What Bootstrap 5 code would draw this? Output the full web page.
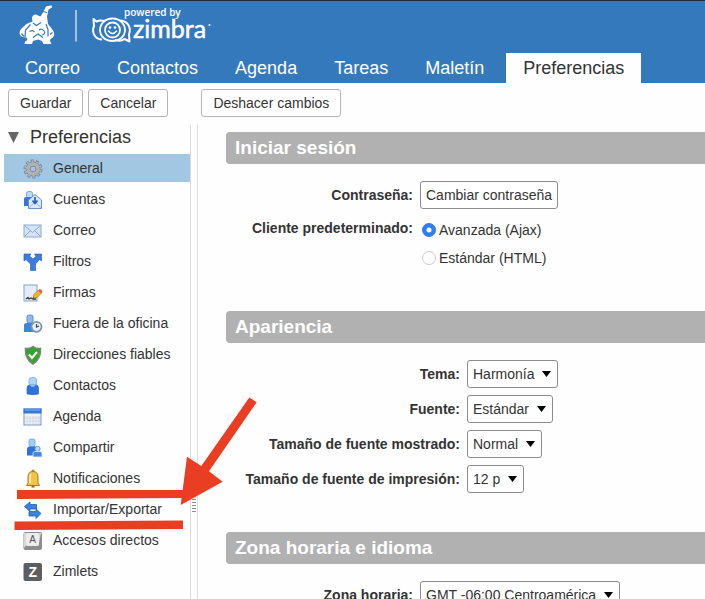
<!DOCTYPE html>
<html lang="es">
<head>
<meta charset="utf-8">
<meta name="viewport" content="width=device-width, initial-scale=1">
<title>Zimbra: Preferencias</title>
<link rel="stylesheet" href="https://cdn.jsdelivr.net/npm/bootstrap@5.3.0/dist/css/bootstrap.min.css">
<style>
  body { font: 14px/20px "Liberation Sans", Arial, sans-serif; color: #333; background: #fefefe; }
  .app-header { background: #3579bd; border-top: 1px solid #1b2c40; }
  .brand-art { display: block; margin-left: 12px; }
  .app-tabs { gap: 3px; padding-left: 8px; }
  .app-tabs .nav-link { padding: 0 17px; font-size: 18px; line-height: 30px; color: #fff; border-radius: 0; white-space: nowrap; }
  .app-tabs .nav-link.active { background: #fefefe; color: #333; margin-left: 2px; }
  .app-toolbar { padding: 6px 8px 8px; gap: 5px; }
  .zbtn { --bs-btn-font-size: 14px; --bs-btn-line-height: 20px; --bs-btn-padding-y: 3px; --bs-btn-padding-x: 11px; --bs-btn-border-color: #b5b5b5; --bs-btn-color: #333; --bs-btn-bg: #fff; --bs-btn-border-radius: 3px; --bs-btn-hover-bg: #eee; --bs-btn-hover-color: #333; }
  .zbtn-field { --bs-btn-padding-x: 5px; --bs-btn-border-color: #8c8c8c; }
  .gap-before { margin-left: 28px; }
  .tree-pane { width: 190px; padding-left: 4px; }
  .tree-title { font-size: 18px; line-height: 24px; gap: 11px; margin: 0 0 5px; padding-left: 4px; font-weight: 400; }
  .tree-items { gap: 3px; }
  .tree-items .nav-link { display: flex; align-items: center; gap: 10px; height: 28px; padding: 0 0 0 19px; color: #333; white-space: nowrap; }
  .tree-items .nav-link.active { background: #a2c7e3; }
  .tree-items svg { width: 20px; height: 20px; margin-top: 2px; flex: none; }
  .splitter { width: 8px; border: solid #dcdcdc; border-width: 0 1px; }
  .grip { width: 4px; height: 26px; margin-top: 276px; background: repeating-linear-gradient(#8b8b8b 0 1px, transparent 1px 3px); }
  .detail-pane { padding: 7px 0 0 28px; }
  .pref-block { margin-bottom: 39px; }
  .pref-title { font-size: 19px; line-height: 32px; font-weight: 700; color: #fff; background: #b1b1b1; border-radius: 4px 0 0 4px; padding-left: 9px; margin: 0 0 17px; }
  .pref-rows { display: grid; grid-template-columns: 187px 1fr; gap: 7px; }
  .pref-rows.wide { grid-template-columns: 234px 1fr; }
  .pref-name { font-weight: 700; text-align: right; line-height: 28px; white-space: nowrap; }
  .pref-name.upper { line-height: 24px; }
  .zselect { width: auto; justify-self: start; padding: 3px 22px 3px 5px; font-size: 14px; line-height: 20px; color: #333; border: 1px solid #8c8c8c; border-radius: 3px; background-color: #fff; background-position: right 6px center; background-size: 9px 6px;
    background-image: url("data:image/svg+xml,%3Csvg xmlns='http://www.w3.org/2000/svg' viewBox='0 0 9 6'%3E%3Cpath d='M0 0h9L4.5 6z'/%3E%3C/svg%3E"); }
  .choice { height: 28px; gap: 3px; padding-left: 2px; }
  .choice .form-check-input { width: 14px; height: 14px; margin: 0; border-color: #ccc; flex: none; }
  .choice .form-check-input:checked { background-color: #2f7cf6; border-color: #2f7cf6; background-size: 10px; }
  .markup { left: 0; top: 390px; pointer-events: none; }
</style>
<script src="https://cdn.jsdelivr.net/npm/bootstrap@5.3.0/dist/js/bootstrap.bundle.min.js"></script>
</head>
<body class="vh-100 overflow-hidden d-flex flex-column position-relative">

<header class="app-header">
  <svg class="brand-art" width="215" height="52" viewBox="12 1 215 52" role="img" aria-label="powered by zimbra">
    <g fill="#fff">
      <path d="M46 6.500l5.500-1.200.500 2.200-3.500 2-1.500 7 1 7.500 4 5c2.500 3 3 6 1 8.500l-2.500 1.500-.5 2 1.500 3h-8l-1.500-3-4-1.500-5 1.500-1 3H24.500l.500-2.500 2.500-1.500-1-2.500-4-.5C19 35.500 18.500 32 21.500 28.500l5-4.500 6-2.500-.500-3.500c.5-3.500 3.500-4.500 6-2.500l2.500 1 2.500-4z"/>
      <g fill="none" stroke="#3579bd" stroke-width="1.200"><path d="M30.500 24.500l-5 5.500-.500 7M33 23l3.500 2.500 4.500-3M46 24l2 5.500v7M29.500 31.500q3.500-2 5 .500M39 30q3-2 5 1t-2 4M33 37.500l5-3.500 5 3.500M21.500 33.500l2.500 3M50 34.500l2.500-2M43 11.500l4 1"/></g>
    </g>
    <path d="M76 10v31.500" stroke="#fff" stroke-opacity=".85" stroke-width="1.300"/>
    <g fill="none" stroke="#fff" stroke-linecap="round" stroke-linejoin="round">
      <circle cx="112.500" cy="30" r="7.500" stroke-width="1.800"/>
      <path d="M104.500 21c-3-1-6-.5-8 .5l-3-2.500.5 7c-2.500 6 .5 12.500 7 13.500M121 20.500c7 1 10.500 7 8 14l.5 7-5-2.500c-2 1.500-6 2-9 1" stroke-width="2"/>
      <path d="M100 30c0-6 5-11.500 12.500-11.500S125 24 125 30s-5 11-12.500 11S100 36 100 30z" stroke-width="1.800"/>
      <path d="M108.500 31q4 5 8 0" stroke-width="1.500"/>
    </g>
    <circle cx="110" cy="27.500" r="1.300" fill="#fff"/><circle cx="115" cy="27.500" r="1.300" fill="#fff"/>
    <text x="124" y="16" font-family="Open Sans, sans-serif" font-size="10" font-weight="600" fill="#fff">powered by</text>
    <text x="133" y="38" font-family="Lato, sans-serif" font-size="25" fill="#fff" stroke="#fff" stroke-width=".5">zimbra</text>
    <circle cx="209.500" cy="25" r="1" fill="#fff"/>
  </svg>
  <nav class="nav app-tabs flex-nowrap" aria-label="Aplicaciones">
    <a class="nav-link" href="#correo">Correo</a>
    <a class="nav-link" href="#contactos">Contactos</a>
    <a class="nav-link" href="#agenda">Agenda</a>
    <a class="nav-link" href="#tareas">Tareas</a>
    <a class="nav-link" href="#maletin">Maletín</a>
    <a class="nav-link active" aria-current="page" href="#preferencias">Preferencias</a>
  </nav>
</header>

<div class="app-toolbar d-flex">
  <button type="button" class="btn zbtn">Guardar</button>
  <button type="button" class="btn zbtn">Cancelar</button>
  <button type="button" class="btn zbtn gap-before">Deshacer cambios</button>
</div>

<div class="d-flex flex-grow-1 overflow-hidden">
  <aside class="tree-pane flex-shrink-0">
    <h1 class="tree-title d-flex align-items-center">
      <svg width="11" height="11" viewBox="0 0 11 11" aria-hidden="true"><path d="M0 0h11L5.500 11z" fill="#666"/></svg>Preferencias
    </h1>
    <nav class="nav flex-column tree-items" aria-label="Preferencias">
      <a class="nav-link active" href="#general"><svg viewBox="0 0 20 20"><g fill="none"><circle cx="10" cy="10" r="8" stroke="#7b8790" stroke-width="3" stroke-dasharray="3.100 1.927"/><circle cx="10" cy="10" r="5" stroke="#7b8790" stroke-width="5"/><circle cx="10" cy="10" r="7.400" stroke="#b0b3b5" stroke-width="2.600" stroke-dasharray="1.700 2.950" stroke-dashoffset="-.7"/><circle cx="10" cy="10" r="4.900" stroke="#b0b3b5" stroke-width="3.600"/><circle cx="10" cy="10" r="3" stroke="#858d94" stroke-width=".8"/></g></svg>General</a>
      <a class="nav-link" href="#cuentas"><svg viewBox="0 0 20 20"><rect x="3.500" y="1.500" width="6" height="7" rx="2" fill="#b9dcf7" stroke="#7aa6d8"/><path d="M1 9q0-2 2-2h6v9H1z" fill="#3675d3"/><path d="M5.500 10l6.500-5.500L18.500 10v8.500h-13z" fill="#dce9f8" stroke="#6b8fc4"/><path d="M6 18l4.500-5M18 18l-4.500-5" stroke="#9ab5dc"/><path d="M12 7v6m-2.500-2.500L12 13.500l2.500-3" fill="none" stroke="#1f5acb" stroke-width="1.600"/></svg>Cuentas</a>
      <a class="nav-link" href="#correo-pref"><svg viewBox="0 0 20 20"><rect x="1" y="4" width="17" height="12" fill="#d3e4f7" stroke="#8da9ce"/><path d="M1.500 4.500l8 7 8-7M1.500 15.500l6-6M17.500 15.500l-6-6" fill="none" stroke="#8da9ce"/></svg>Correo</a>
      <a class="nav-link" href="#filtros"><svg viewBox="0 0 20 20"><path d="M1 2h7L6.500 4l3.500 3L13 4.500 11.500 2h7v7l-2-1.500-4 4.500v6.500h-5V12l-4.500-4.500L1 9z" fill="#3b7ce0" stroke="#1e57b8" stroke-width=".6"/></svg>Filtros</a>
      <a class="nav-link" href="#firmas"><svg viewBox="0 0 20 20"><rect x="1" y="2" width="13" height="16" fill="#e3eefa" stroke="#8aa2bd"/><path d="M3 16l2-1.500 1 1.500 2-1 2 1h3" fill="none" stroke="#333" stroke-width="1.300"/><path d="M10 16l1-4.500 4.500-4.500 3 3-4.500 4.500z" fill="#f0b629" stroke="#a96f13" stroke-width=".7"/><path d="M15 7.500L16.500 6q3 .5 3 3L18 10.500z" fill="#e36452"/><path d="M10 16l.500-2 1.500 1.500z" fill="#333"/></svg>Firmas</a>
      <a class="nav-link" href="#fuera"><svg viewBox="0 0 20 20"><rect x="4" y="1" width="6" height="8" rx="2" fill="#8dbcec" stroke="#5a94d4"/><path d="M1 11q0-2 3-2h7v9H1z" fill="#3e83dc"/><circle cx="13.500" cy="12.800" r="5" fill="#e8f0f8" stroke="#7c92a9" stroke-width="1.700"/><path d="M13.500 10v3l2.500-1" fill="none" stroke="#445" stroke-width="1.200"/></svg>Fuera de la oficina</a>
      <a class="nav-link" href="#direcciones"><svg viewBox="0 0 20 20"><path d="M10 1.500q3 2.500 7.500 2Q18 14 10 19 2 14 2.500 3.500 7 4 10 1.500z" fill="#35a52d" stroke="#78867a" stroke-width="1.600"/><path d="M6 9.500l3 3.500 5-6" fill="none" stroke="#fff" stroke-width="2"/></svg>Direcciones fiables</a>
      <a class="nav-link" href="#contactos-pref"><svg viewBox="0 0 20 20"><rect x="6" y="1.500" width="7.500" height="8.500" rx="2.500" fill="#aed6f7" stroke="#76aee4" stroke-width=".8"/><path d="M4 12q0-3 3-3h5.500q3 0 3 3v6q-5 1.500-11.500 0z" fill="#2f72db" stroke="#2460b8" stroke-width=".6"/><path d="M6.500 9q3 4 6.500 0" fill="#8dc0f3"/></svg>Contactos</a>
      <a class="nav-link" href="#agenda-pref"><svg viewBox="0 0 20 20"><rect x="1" y="2" width="17" height="16" fill="#f0f1f3" stroke="#6e97cf"/><path d="M.500 1.500h18v5H.500z" fill="#3977d7"/><path d="M2 3h15" stroke="#86b1f0"/><path d="M4 9v8M7 9v8M10 9v8M13 9v8M16 9v8M2 11h15M2 14h15" stroke="#cfd3d9" stroke-width=".8"/></svg>Agenda</a>
      <a class="nav-link" href="#compartir"><svg viewBox="0 0 20 20"><rect x="6" y="1" width="6" height="8" rx="2" fill="#a4cff5" stroke="#6aa3df" stroke-width=".8"/><path d="M4 11q0-2.500 3-2.500h5q2 0 2 2.500v6.500H4z" fill="#2f72db"/><circle cx="14.500" cy="10.800" r="2.600" fill="#b7daf8" stroke="#4c87d0" stroke-width=".8"/><path d="M10 19v-3.500q0-2 2-2h5q2 0 2 2V19z" fill="#4387e4" stroke="#e4effb" stroke-width=".8"/></svg>Compartir</a>
      <a class="nav-link" href="#notificaciones"><svg viewBox="0 0 20 20"><circle cx="10" cy="2" r="1.500" fill="#b58a29"/><path d="M5 14V8q0-5.500 5-5.500T15 8v6l1.500 2.500h-13z" fill="#f0c548" stroke="#a77c21"/><path d="M8 5q-1.500 2-1 9" stroke="#fff1b6" stroke-width="1.500" fill="none"/><path d="M8.500 17h3v1.500h-3z" fill="#8c6416"/></svg>Notificaciones</a>
      <a class="nav-link" href="#importar"><svg viewBox="0 0 20 20"><path d="M1.500 6.500L7 2v2.500h6.500V9H7v2.500zM18 13.500L13 9v2.500H6V16h7v2.500z" fill="#3d82dc" stroke="#2260b5" stroke-width=".8"/></svg>Importar/Exportar</a>
      <a class="nav-link" href="#accesos"><svg viewBox="0 0 20 20"><rect x=".5" y="1" width="18.500" height="18" rx="2" fill="#8d8d8d"/><path d="M1 2h17l-2.500 12.500H3L1 17z" fill="#d8d8d8"/><rect x="3" y="2" width="13" height="13" rx="2" fill="#eee"/><text x="9.500" y="12" text-anchor="middle" font-family="Liberation Sans, sans-serif" font-size="10" fill="#555">A</text></svg>Accesos directos</a>
      <a class="nav-link" href="#zimlets"><svg viewBox="0 0 20 20"><rect x=".5" y="1" width="18.500" height="18" rx="2" fill="#5c5e60"/><text x="9.700" y="15" text-anchor="middle" font-family="Liberation Sans, sans-serif" font-size="14" font-weight="700" fill="#fff">Z</text></svg>Zimlets</a>
    </nav>
  </aside>

  <div class="splitter flex-shrink-0 d-flex flex-column align-items-center justify-content-center" role="separator" aria-orientation="vertical"><div class="grip"></div></div>

  <main class="detail-pane flex-grow-1 overflow-hidden">
    <section class="pref-block">
      <h2 class="pref-title">Iniciar sesión</h2>
      <div class="pref-rows">
        <span class="pref-name" id="pw-name">Contraseña:</span>
        <div><button type="button" class="btn zbtn zbtn-field text-nowrap" aria-describedby="pw-name">Cambiar contraseña</button></div>
        <span class="pref-name upper" id="client-name">Cliente predeterminado:</span>
        <div role="radiogroup" aria-labelledby="client-name">
          <div class="choice d-flex align-items-center"><input class="form-check-input" type="radio" name="client" id="client-ajax" checked><label for="client-ajax">Avanzada (Ajax)</label></div>
          <div class="choice d-flex align-items-center"><input class="form-check-input" type="radio" name="client" id="client-html"><label for="client-html">Estándar (HTML)</label></div>
        </div>
      </div>
    </section>
    <section class="pref-block">
      <h2 class="pref-title">Apariencia</h2>
      <div class="pref-rows wide">
        <label class="pref-name" for="theme">Tema:</label>
        <select class="form-select zselect" id="theme"><option>Harmonía</option></select>
        <label class="pref-name" for="font">Fuente:</label>
        <select class="form-select zselect" id="font"><option>Estándar</option></select>
        <label class="pref-name" for="size">Tamaño de fuente mostrado:</label>
        <select class="form-select zselect" id="size"><option>Normal</option></select>
        <label class="pref-name" for="print">Tamaño de fuente de impresión:</label>
        <select class="form-select zselect" id="print"><option>12 p</option></select>
      </div>
    </section>
    <section class="pref-block">
      <h2 class="pref-title">Zona horaria e idioma</h2>
      <div class="pref-rows">
        <label class="pref-name" for="zone">Zona horaria:</label>
        <select class="form-select zselect" id="zone"><option>GMT -06:00 Centroamérica</option></select>
      </div>
    </section>
  </main>
</div>

<svg class="markup position-absolute" width="262" height="144" viewBox="0 390 262 144" fill="#e93e23" aria-hidden="true">
  <path d="M17 490H184V498L17 499zM14.500 521.500L183 520.500V529L14.500 530z"/>
  <path d="M249.300 397.500L256.700 402.300 209 471.300 222.700 481.700 180.700 505 187 456.700 201.300 466z"/>
</svg>
</body>
</html>
